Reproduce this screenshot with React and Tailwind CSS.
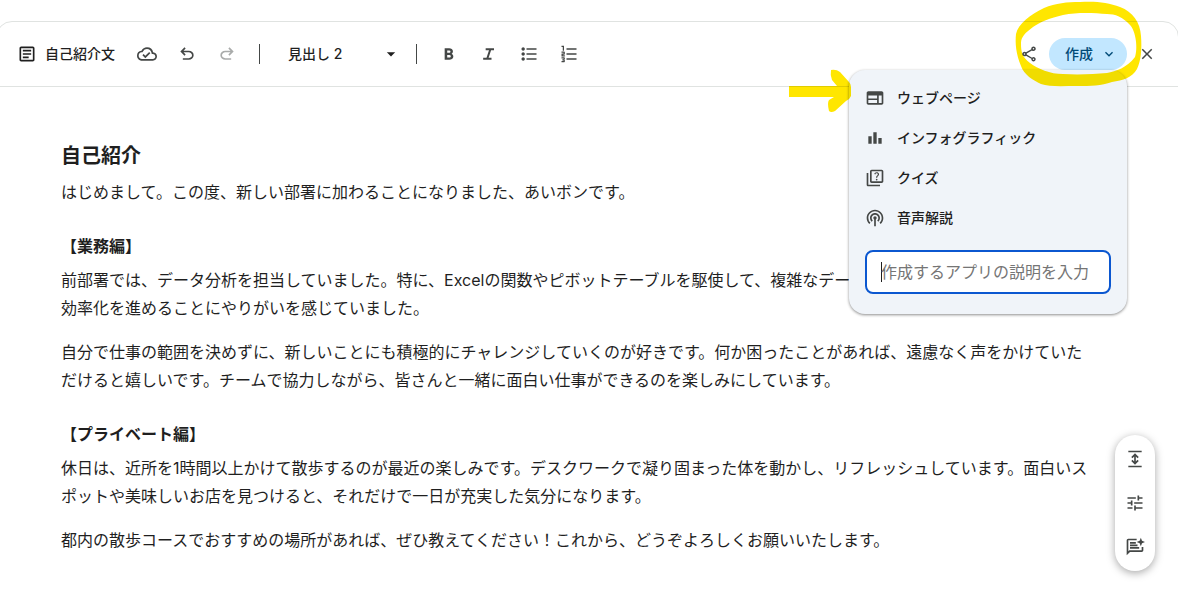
import React, { useState } from 'react'
import {
  MdOutlineArticle,
  MdOutlineCloudDone,
  MdOutlineShare,
  MdClose,
  MdExpandMore,
  MdArrowDropDown,
  MdOutlineQuiz,
  MdPodcasts,
  MdTune,
} from 'react-icons/md'

const symbol = (d) => ({ className }) => (
  <svg viewBox="0 -960 960 960" fill="currentColor" className={className}>
    <path d={d} />
  </svg>
)

const UndoIcon = symbol("M280-200v-80h284q63 0 109.5-40T720-420q0-60-46.5-100T564-560H312l104 104-56 56-200-200 200-200 56 56-104 104h252q97 0 169.5 63T800-420q0 94-72.5 157T564-200H280Z")
const BoldIcon = symbol("M272-200v-560h221q65 0 120 40t55 111q0 51-23 78.5T602-491q25 11 55.5 41t30.5 90q0 89-65 124.5T501-200H272Zm121-112h104q48 0 58.5-24.5T566-372q0-11-10.5-35.500T494-432H393v120Zm0-228h93q33 0 48-17t15-38q0-24-17-39t-44-15h-95v109Z")
const ItalicIcon = symbol("M200-200v-100h160l120-360H320v-100h400v100H580L460-300h140v100H200Z")
const BulletIcon = symbol("M360-200v-80h480v80H360Zm0-240v-80h480v80H360Zm0-240v-80h480v80H360ZM200-160q-33 0-56.5-23.5T120-240q0-33 23.5-56.5T200-320q33 0 56.5 23.5T280-240q0 33-23.5 56.5T200-160Zm0-240q-33 0-56.5-23.5T120-480q0-33 23.5-56.5T200-560q33 0 56.5 23.5T280-480q0 33-23.5 56.5T200-400Zm0-240q-33 0-56.5-23.5T120-720q0-33 23.5-56.5T200-800q33 0 56.5 23.5T280-720q0 33-23.5 56.5T200-640Z")
const NumberIcon = symbol("M120-80v-60h100v-30h-60v-60h60v-30H120v-60h120q17 0 28.5 11.5T280-280v40q0 17-11.5 28.5T240-200q17 0 28.5 11.5T280-160v40q0 17-11.5 28.5T240-80H120Zm0-280v-110q0-17 11.5-28.5T160-510h60v-30H120v-60h120q17 0 28.5 11.5T280-560v70q0 17-11.5 28.5T240-450h-60v30h100v60H120Zm60-280v-180h-60v-60h120v240h-60Zm180 440v-80h480v80H360Zm0-240v-80h480v80H360Zm0-240v-80h480v80H360Z")
const WebIcon = symbol("M160-160q-33 0-56.5-23.5T80-240v-480q0-33 23.5-56.5T160-800h640q33 0 56.5 23.5T880-720v480q0 33-23.5 56.5T800-160H160Zm0-80h420v-140H160v140Zm500 0h140v-360H660v360ZM160-460h420v-140H160v140Z")
const ChartIcon = symbol("M640-200v-280h160v280H640Zm-240 0v-560h160v560H400Zm-240 0v-360h160v360H160Z")

const LengthIcon = ({ className }) => (
  <svg viewBox="0 0 24 24" fill="currentColor" className={className}>
    <path d="M4 2h16v2H4zM4 20h16v2H4zM12 5l4.500 4.500-1.500 1.500-2-2v6l2-2 1.500 1.500L12 19l-4.500-4.500L9 13l2 2V9l-2 2-1.500-1.500z" />
  </svg>
)

const SuggestIcon = ({ className }) => (
  <svg viewBox="0 0 24 24" fill="currentColor" className={className}>
    <path d="M2 22V4c0-1.100.9-2 2-2h10v2H4v13.200L5.200 16H20v-4h2v4c0 1.100-.9 2-2 2H6z" />
    <path d="M6 6h7v2H6zM6 9h9v2H6zM6 12h11v2H6z" />
    <path d="M19 1l1.400 3.600L24 6l-3.600 1.400L19 11l-1.400-3.600L14 6l3.600-1.400z" />
  </svg>
)

const menuItems = [
  { label: 'ウェブページ', Icon: WebIcon },
  { label: 'インフォグラフィック', Icon: ChartIcon },
  { label: 'クイズ', Icon: MdOutlineQuiz },
  { label: '音声解説', Icon: MdPodcasts },
]

const IconButton = ({ label, children, disabled }) => (
  <button type="button" aria-label={label} disabled={disabled} className="flex h-8 w-8 items-center justify-center rounded-full text-[#444746] disabled:text-[#a9abaa]">
    {children}
  </button>
)

const CreateMenu = () => {
  const [prompt, setPrompt] = useState('')

  return (
    <div className="absolute right-0 top-full z-10 w-[278px] rounded-2xl bg-[#f0f4f9] pt-2 pb-5 shadow-[0_1px_3px_rgba(0,0,0,0.45)]">
      <ul>
        {menuItems.map(({ label, Icon }) => (
          <li key={label}>
            <button type="button" className="flex h-10 w-full items-center gap-3 px-4 text-sm font-medium text-[#1f1f1f]">
              <Icon className="h-5 w-5 text-[#444746]" />
              {label}
            </button>
          </li>
        ))}
      </ul>
      <label className="mx-4 mt-3 flex h-11 items-center rounded-lg border-2 border-[#0b57d0] bg-white px-3.5">
        <span className="-mr-px h-5 w-px shrink-0 bg-[#1f1f1f]" />
        <input
          type="text"
          aria-label="作成するアプリの説明"
          value={prompt}
          onChange={(e) => setPrompt(e.target.value)}
          placeholder="作成するアプリの説明を入力"
          className="w-full min-w-0 text-base text-[#1f1f1f] outline-none placeholder:text-[#757575]"
        />
      </label>
    </div>
  )
}

// highlighter marks around the create button
const Marker = () => (
  <svg viewBox="785 0 360 115" className="pointer-events-none absolute -right-[18px] -top-[38px] z-20 h-[115px] w-[360px] max-w-none mix-blend-multiply">
    <path
      fill="#ffe600"
      fillRule="evenodd"
      d="M1016 34C1018 24 1031 14 1044 8C1056 3 1067 2 1080 2C1094 1 1108 2 1120 7C1133 12 1140 22 1141 36C1142 49 1141 61 1137 69C1132 78 1123 80 1112 82C1101 86 1091 86 1077 86C1063 86 1049 87 1041 84C1033 80 1024 75 1021 66C1016 54 1015 43 1016 34ZM1021 43C1021 52 1022 57 1030 63C1038 69 1050 74 1063 74C1080 75 1094 74 1107 73C1116 71 1127 68 1135 57C1138 49 1136 31 1130 25C1123 17 1115 14 1107 14C1094 13 1078 12 1063 15C1050 18 1040 22 1033 27C1025 33 1021 37 1021 43Z"
    />
    <path fill="#ffe600" d="M789 86H837L832 80Q830 75 831 70Q836 69 840 72L849 82Q851 84 851 87V96Q850 99 846 101L835 111Q831 113 829 111Q827 103 829 100L834 97H789Z" />
  </svg>
)

const Toolbar = () => (
  <header className="-ml-1 -mr-px flex h-[66px] items-center justify-between rounded-t-2xl border border-[#e0e3e1] pl-5 pr-[15px]">
    <div className="flex items-center">
      <div className="flex items-center gap-2 text-sm font-medium text-[#1f1f1f]">
        <MdOutlineArticle className="h-5 w-5" />
        自己紹介文
      </div>
      <div className="ml-4 flex items-center gap-2">
        <IconButton label="保存済み">
          <MdOutlineCloudDone className="h-5 w-5" />
        </IconButton>
        <IconButton label="元に戻す">
          <UndoIcon className="h-5 w-5" />
        </IconButton>
        <IconButton label="やり直す" disabled>
          <UndoIcon className="h-5 w-5 -scale-x-100" />
        </IconButton>
      </div>
      <div className="ml-4 h-5 w-px bg-[#444746]" />
      <div className="relative ml-7 w-[113px]">
        <select aria-label="スタイル" defaultValue="h2" className="block w-full appearance-none bg-transparent text-sm font-medium text-[#1f1f1f] outline-none">
          <option value="h1">見出し 1</option>
          <option value="h2">見出し 2</option>
          <option value="p">本文</option>
        </select>
        <MdArrowDropDown className="pointer-events-none absolute right-0 top-0 h-5 w-5 text-[#1f1f1f]" />
      </div>
      <div className="ml-[15px] h-5 w-px bg-[#444746]" />
      <div className="ml-4 flex items-center gap-2">
        <IconButton label="太字">
          <BoldIcon className="h-5 w-5" />
        </IconButton>
        <IconButton label="斜体">
          <ItalicIcon className="h-5 w-5" />
        </IconButton>
        <IconButton label="箇条書き">
          <BulletIcon className="h-5 w-5" />
        </IconButton>
        <IconButton label="番号付きリスト">
          <NumberIcon className="h-5 w-5" />
        </IconButton>
      </div>
    </div>
    <div className="flex items-center gap-1">
      <IconButton label="共有">
        <MdOutlineShare className="h-[18px] w-[18px]" />
      </IconButton>
      <div className="relative">
        <button type="button" className="flex h-8 items-center gap-2 rounded-full bg-[#c2e7ff] pl-4 pr-2.5 text-sm font-medium text-[#004a77]">
          作成
          <MdExpandMore className="h-4 w-4" />
        </button>
        <CreateMenu />
        <Marker />
      </div>
      <IconButton label="閉じる">
        <MdClose className="h-[18px] w-[18px]" />
      </IconButton>
    </div>
  </header>
)

const App = () => {
  return (
    <div className="min-h-screen overflow-x-hidden bg-white pt-[21px] font-[Inter,'Noto_Sans_CJK_JP',sans-serif] text-[#1f1f1f]">
      <Toolbar />
      <main className="pt-[55px] pr-[86px] pb-10 pl-[61px] text-base leading-7">
        <h2 className="mb-2 text-xl leading-7 font-bold">自己紹介</h2>
        <p>はじめまして。この度、新しい部署に加わることになりました、あいボンです。</p>
        <h3 className="mt-[26px] mb-1.5 font-bold">【業務編】</h3>
        <p className="mb-4">
          前部署では、データ分析を担当していました。特に、Excelの関数やピボットテーブルを駆使して、複雑なデータの集計や可視化、そして業務の効率化を進めることにやりがいを感じていました。
        </p>
        <p>
          自分で仕事の範囲を決めずに、新しいことにも積極的にチャレンジしていくのが好きです。何か困ったことがあれば、遠慮なく声をかけていただけると嬉しいです。チームで協力しながら、皆さんと一緒に面白い仕事ができるのを楽しみにしています。
        </p>
        <h3 className="mt-[26px] mb-1.5 font-bold">【プライベート編】</h3>
        <p className="mb-4">
          休日は、近所を1時間以上かけて散歩するのが最近の楽しみです。デスクワークで凝り固まった体を動かし、リフレッシュしています。面白いスポットや美味しいお店を見つけると、それだけで一日が充実した気分になります。
        </p>
        <p>都内の散歩コースでおすすめの場所があれば、ぜひ教えてください！これから、どうぞよろしくお願いいたします。</p>
      </main>
      <div className="fixed right-[23px] bottom-[23px] flex h-[136px] w-10 flex-col items-center justify-between rounded-full bg-white py-2 shadow-[0_2px_8px_rgba(0,0,0,0.35)]">
        <IconButton label="長さを調整">
          <LengthIcon className="h-5 w-5" />
        </IconButton>
        <IconButton label="トーンを変更">
          <MdTune className="h-5 w-5" />
        </IconButton>
        <IconButton label="編集を提案">
          <SuggestIcon className="h-5 w-5" />
        </IconButton>
      </div>
    </div>
  )
}

export default App
